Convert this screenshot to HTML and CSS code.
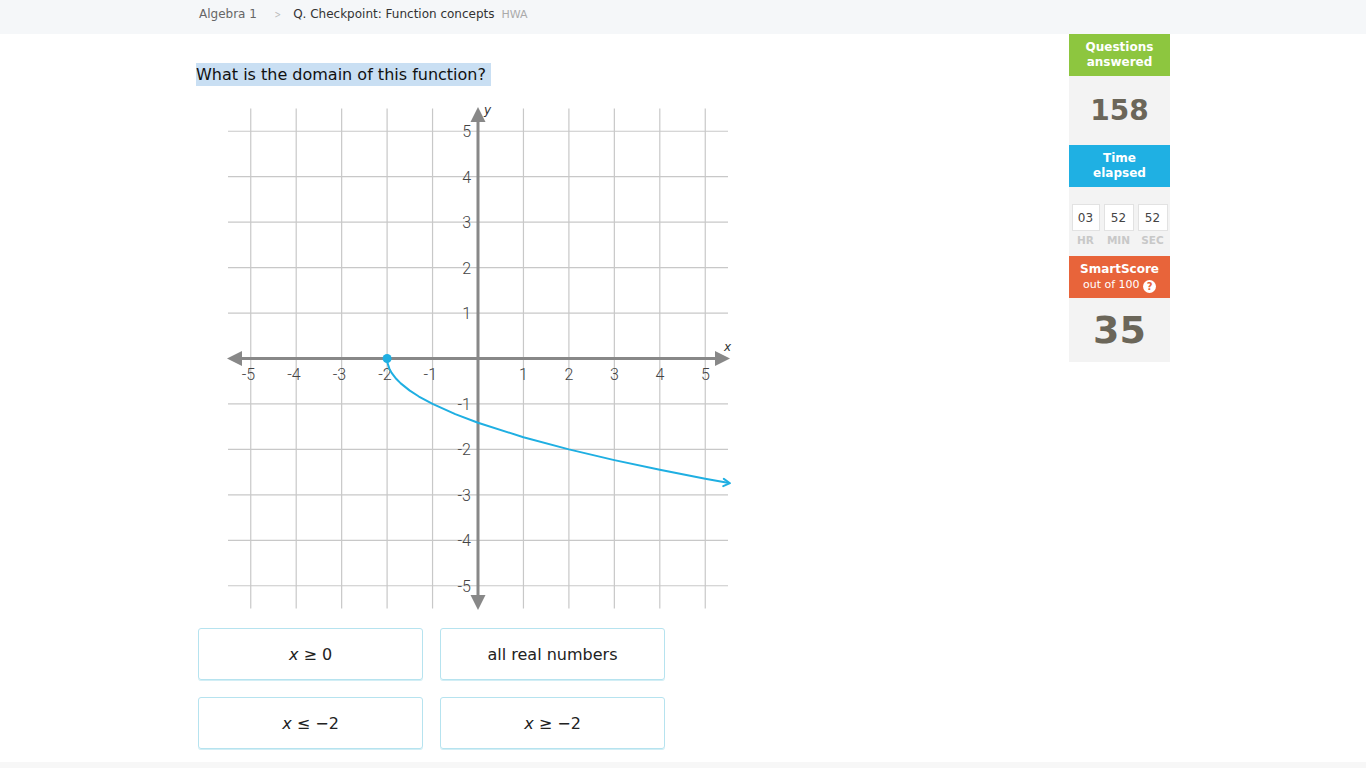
FILE: index.html
```html
<!DOCTYPE html>
<html>
<head>
<meta charset="utf-8">
<link rel="stylesheet" href="styles.css">
</head>
<body>
<div class="topbar">
  <div class="crumbs">
    <span class="crumb">Algebra 1</span>
    <span class="chev">&gt;</span>
    <span class="crumb-cur">Q. Checkpoint: Function concepts</span>
    <span class="tag">HWA</span>
  </div>
</div>
<div class="page">
  <div class="main">
    <div class="question"><span class="qtext">What is the domain of this function?&nbsp;</span></div>
    <svg class="graph" width="520" height="516" viewBox="0 0 520 516">
      <g transform="translate(258,258.5)">
        <g stroke="#c8c8c8" stroke-width="1.2">
          <line x1="-227.25" y1="-250" x2="-227.25" y2="250"/>
          <line x1="-181.8" y1="-250" x2="-181.8" y2="250"/>
          <line x1="-136.35" y1="-250" x2="-136.35" y2="250"/>
          <line x1="-90.9" y1="-250" x2="-90.9" y2="250"/>
          <line x1="-45.45" y1="-250" x2="-45.45" y2="250"/>
          <line x1="45.45" y1="-250" x2="45.45" y2="250"/>
          <line x1="90.9" y1="-250" x2="90.9" y2="250"/>
          <line x1="136.35" y1="-250" x2="136.35" y2="250"/>
          <line x1="181.8" y1="-250" x2="181.8" y2="250"/>
          <line x1="227.25" y1="-250" x2="227.25" y2="250"/>
          <line y1="-227.25" x1="-250" y2="-227.25" x2="250"/>
          <line y1="-181.8" x1="-250" y2="-181.8" x2="250"/>
          <line y1="-136.35" x1="-250" y2="-136.35" x2="250"/>
          <line y1="-90.9" x1="-250" y2="-90.9" x2="250"/>
          <line y1="-45.45" x1="-250" y2="-45.45" x2="250"/>
          <line y1="45.45" x1="-250" y2="45.45" x2="250"/>
          <line y1="90.9" x1="-250" y2="90.9" x2="250"/>
          <line y1="136.35" x1="-250" y2="136.35" x2="250"/>
          <line y1="181.8" x1="-250" y2="181.8" x2="250"/>
          <line y1="227.25" x1="-250" y2="227.25" x2="250"/>
        </g>
        <g stroke="#888" stroke-width="3">
          <line x1="-238" y1="0" x2="240" y2="0"/>
          <line x1="0" y1="-238" x2="0" y2="238"/>
        </g>
        <g fill="#888">
          <polygon points="-251,0 -236,-7.5 -236,7.5"/>
          <polygon points="252,0 237,-7.5 237,7.5"/>
          <polygon points="0,-251.5 -7.5,-236.5 7.5,-236.5"/>
          <polygon points="0,251.5 -7.5,236.5 7.5,236.5"/>
        </g>
        <g class="lbl" text-anchor="end">
          <text x="-222.75" y="21">-5</text>
          <text x="-177.3" y="21">-4</text>
          <text x="-131.85" y="21">-3</text>
          <text x="-86.4" y="21">-2</text>
          <text x="-40.95" y="21">-1</text>
          <text x="49.95" y="21">1</text>
          <text x="95.4" y="21">2</text>
          <text x="140.85" y="21">3</text>
          <text x="186.3" y="21">4</text>
          <text x="231.75" y="21">5</text>
          <text x="-7" y="-221.25">5</text>
          <text x="-7" y="-175.8">4</text>
          <text x="-7" y="-130.35">3</text>
          <text x="-7" y="-84.9">2</text>
          <text x="-7" y="-39.45">1</text>
          <text x="-7" y="51.45">-1</text>
          <text x="-7" y="96.9">-2</text>
          <text x="-7" y="142.35">-3</text>
          <text x="-7" y="187.8">-4</text>
          <text x="-7" y="233.25">-5</text>
        </g>
        <text class="axis-name" x="246" y="-8">x</text>
        <text class="axis-name" x="6" y="-245">y</text>
        <path d="M-90.9,0 L-90.45,4.55 L-88.63,10.16 L-86.36,14.37 L-81.81,20.33 L-77.27,24.89 L-68.18,32.14 L-59.09,38.03 L-45.45,45.45 L-22.73,55.66 L0,64.28 L45.45,78.72 L90.9,90.9 L136.35,101.63 L181.8,111.33 L227.25,120.25 L251,124.6" fill="none" stroke="#1fafe2" stroke-width="2" stroke-linejoin="round"/>
        <polyline points="245.2,127.6 252,124.7 245.8,120.4" fill="none" stroke="#1fafe2" stroke-width="2" stroke-linejoin="round" stroke-linecap="round"/>
        <circle cx="-90.9" cy="0" r="4.5" fill="#1fafe2"/>
      </g>
    </svg>
    <div class="answers">
      <div class="answer"><i>x</i>&nbsp;≥ 0</div>
      <div class="answer">all real numbers</div>
      <div class="answer"><i>x</i>&nbsp;≤ −2</div>
      <div class="answer"><i>x</i>&nbsp;≥ −2</div>
    </div>
  </div>
  <div class="sidebar">
    <div class="stat-head green">Questions<br>answered</div>
    <div class="stat-body big1">158</div>
    <div class="stat-head blue">Time<br>elapsed</div>
    <div class="stat-body timer">
      <div class="tcell"><div class="tbox">03</div><div class="tlbl">HR</div></div>
      <div class="tcell"><div class="tbox">52</div><div class="tlbl">MIN</div></div>
      <div class="tcell"><div class="tbox">52</div><div class="tlbl">SEC</div></div>
    </div>
    <div class="stat-head orange">SmartScore<br><span class="sub">out of 100 <span class="help">?</span></span></div>
    <div class="stat-body big2">35</div>
  </div>
</div>
<div class="footer"></div>
</body>
</html>
```
FILE: styles.css
```css
html, body {
  margin: 0;
  padding: 0;
  background: #fff;
  font-family: "DejaVu Sans", Verdana, sans-serif;
  color: #222;
}
.topbar {
  height: 34px;
  background: #f5f7f9;
  display: flex;
  align-items: center;
}
.crumbs {
  margin-left: 199px;
  display: flex;
  align-items: center;
  font-size: 12px;
  position: relative;
  top: -3px;
}
.crumb { color: #666; }
.chev {
  color: #bbb;
  margin: 0 11px 0 16px;
  font-size: 11px;
  transform: scaleX(0.7);
}
.crumb-cur { color: #333; }
.tag {
  color: #aaa;
  font-size: 11px;
  margin-left: 7px;
}
.page {
  display: flex;
  width: 974px;
  margin-left: 196px;
  height: 728px;
}
.main {
  flex: 1;
  padding-top: 30px;
}
.question {
  font-size: 16px;
  line-height: 22px;
  height: 22px;
}
.qtext {
  background: #c9dff3;
  color: #111;
  padding: 2px 0 2px 0;
}
.graph {
  display: block;
  margin-top: 14px;
  margin-left: 24px;
}
.lbl text {
  font-family: Roboto, "Liberation Sans", sans-serif;
  font-size: 16px;
  font-weight: 300;
  fill: #444;
}
.axis-name {
  font-family: "DejaVu Sans", sans-serif;
  font-style: italic;
  font-size: 12px;
  fill: #333;
}
.answers {
  margin-top: 12px;
  margin-left: 2px;
  display: grid;
  grid-template-columns: 225px 225px;
  gap: 17px 17px;
}
.answer {
  height: 50px;
  border: 1px solid #b6e3ef;
  border-radius: 3px;
  box-shadow: 0 1px 0 #d2eef5;
  display: flex;
  align-items: center;
  justify-content: center;
  font-size: 16px;
  color: #222;
}
.answer i { font-style: italic; }
.sidebar {
  width: 101px;
  display: flex;
  flex-direction: column;
}
.stat-head {
  height: 42px;
  color: #fff;
  font-weight: bold;
  font-size: 12px;
  line-height: 15px;
  text-align: center;
  display: flex;
  flex-direction: column;
  justify-content: center;
}
.green { background: #8dc63f; }
.blue { background: #1fb0e3; }
.orange { background: #e8643a; }
.sub {
  font-weight: normal;
  font-size: 11px;
}
.help {
  display: inline-block;
  width: 13px;
  height: 13px;
  border-radius: 50%;
  background: #fff;
  color: #e8643a;
  font-weight: bold;
  font-size: 10px;
  line-height: 13px;
  text-align: center;
  vertical-align: -2px;
}
.stat-body {
  background: #f3f3f3;
  display: flex;
  justify-content: center;
  align-items: center;
  color: #6b6659;
  font-weight: bold;
}
.big1 {
  height: 69px;
  font-size: 28px;
}
.big2 {
  height: 64px;
  font-size: 38px;
}
.timer {
  height: 69px;
  gap: 4px;
  align-items: flex-start;
  padding-top: 17px;
  box-sizing: border-box;
}
.tcell {
  display: flex;
  flex-direction: column;
  align-items: center;
}
.tbox {
  width: 26px;
  height: 25px;
  background: #fff;
  border: 1px solid #e2e2e2;
  font-size: 12px;
  font-weight: normal;
  color: #444;
  display: flex;
  align-items: center;
  justify-content: center;
}
.tcell:nth-child(2) .tbox, .tcell:nth-child(3) .tbox { width: 28px; }
.tlbl {
  font-size: 10.5px;
  color: #c8c8c8;
  margin-top: 3px;
  font-weight: bold;
}
.footer {
  height: 6px;
  background: #f7f7f7;
}
```
